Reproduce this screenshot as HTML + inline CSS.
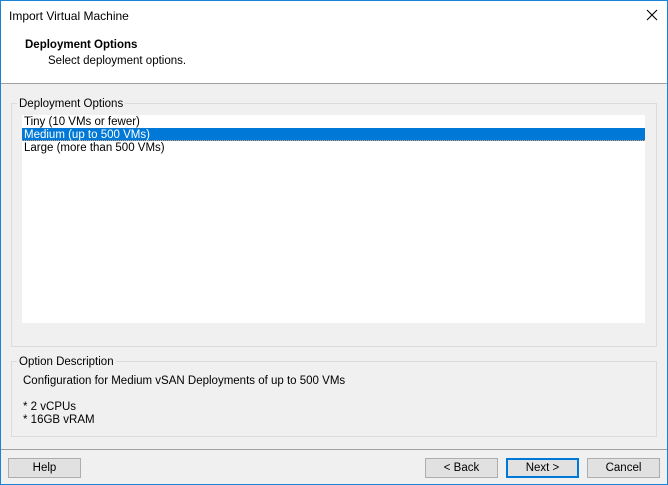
<!DOCTYPE html>
<html><head><style>
*{margin:0;padding:0;box-sizing:border-box}
body{width:668px;height:485px;overflow:hidden;font-family:"Liberation Sans",sans-serif;font-size:11.5px;color:#000;background:#f0f0f0;position:relative}
.a{position:absolute}
.frame{position:absolute;border:1px solid #dcdcdc}
.leg{position:absolute;background:#f0f0f0;padding:0 2px;line-height:14px}
.btn{position:absolute;height:20px;border:1px solid #adadad;background:#e1e1e1;text-align:center;line-height:19px}
</style></head><body>
<div class="a" style="left:0;top:0;width:668px;height:83px;background:#fff"></div>
<div class="a" style="left:0;top:83px;width:668px;height:1px;background:#a0a0a0"></div>
<div class="a" style="left:9px;top:9px;font-size:12px">Import Virtual Machine</div>
<svg class="a" style="left:646px;top:9px" width="12" height="12"><path d="M1 1L11 11M11 1L1 11" stroke="#000" stroke-width="1.1"/></svg>
<div class="a" style="left:25px;top:39px;font-weight:bold;font-size:11.5px">Deployment Options</div>
<div class="a" style="left:48px;top:55px">Select deployment options.</div>

<div class="frame" style="left:11px;top:103px;width:646px;height:244px"></div>
<div class="leg" style="left:17px;top:97px">Deployment Options</div>
<div class="a" style="left:22px;top:115px;width:623px;height:208px;background:#fff"></div>
<div class="a" style="left:24px;top:116px;line-height:13px">Tiny (10 VMs or fewer)</div>
<div class="a" style="left:22px;top:128px;width:623px;height:13px;background:#0078d7;border-bottom:1px dotted #e0a070"></div>
<div class="a" style="left:24px;top:129px;line-height:13px;color:#fff">Medium (up to 500 VMs)</div>
<div class="a" style="left:24px;top:142px;line-height:13px">Large (more than 500 VMs)</div>

<div class="frame" style="left:11px;top:361px;width:646px;height:76px"></div>
<div class="leg" style="left:17px;top:355px">Option Description</div>
<div class="a" style="left:23px;top:375px">Configuration for Medium vSAN Deployments of up to 500 VMs</div>
<div class="a" style="left:23px;top:401px">* 2 vCPUs</div>
<div class="a" style="left:23px;top:414px">* 16GB vRAM</div>

<div class="a" style="left:0;top:449px;width:668px;height:1px;background:#a0a0a0"></div>
<div class="btn" style="left:8px;top:458px;width:73px">Help</div>
<div class="btn" style="left:425px;top:458px;width:73px">&lt; Back</div>
<div class="btn" style="left:506px;top:458px;width:73px;border:2px solid #0078d7;line-height:17px">Next &gt;</div>
<div class="btn" style="left:587px;top:458px;width:73px">Cancel</div>

<div class="a" style="left:0;top:0;width:668px;height:485px;border:1px solid #1883d7"></div>
</body></html>
